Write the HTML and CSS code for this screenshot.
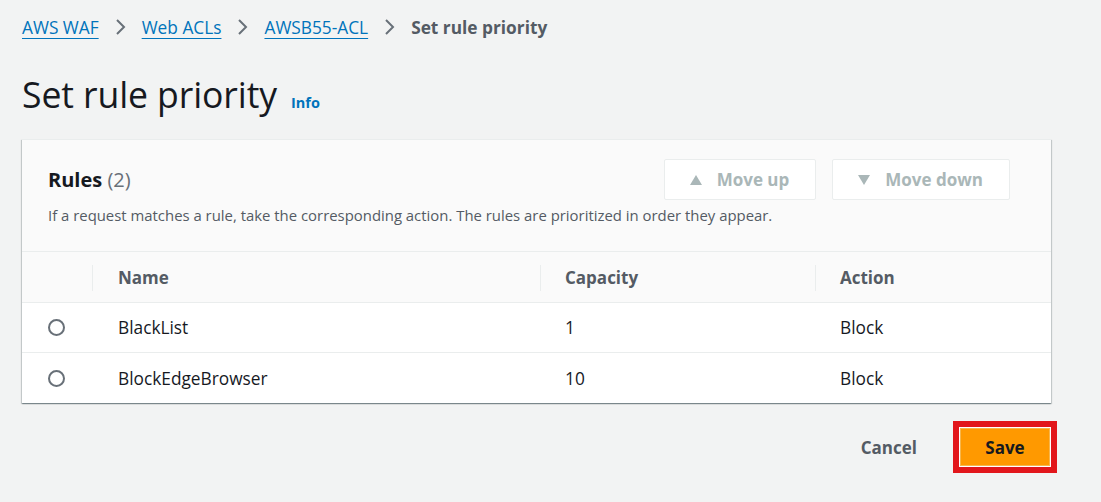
FILE: index.html
```html
<!DOCTYPE html>
<html>
<head>
<meta charset="utf-8">
<link rel="stylesheet" href="styles.css">
</head>
<body>
<div class="page">
  <nav class="crumbs">
    <a class="crumb-link">AWS WAF</a>
    <svg class="chev" viewBox="0 0 12 18" width="12" height="18"><path d="M3 2 L10 9 L3 16" fill="none" stroke="#687078" stroke-width="2"/></svg>
    <a class="crumb-link">Web ACLs</a>
    <svg class="chev" viewBox="0 0 12 18" width="12" height="18"><path d="M3 2 L10 9 L3 16" fill="none" stroke="#687078" stroke-width="2"/></svg>
    <a class="crumb-link">AWSB55-ACL</a>
    <svg class="chev" viewBox="0 0 12 18" width="12" height="18"><path d="M3 2 L10 9 L3 16" fill="none" stroke="#687078" stroke-width="2"/></svg>
    <span class="crumb-current">Set rule priority</span>
  </nav>

  <div class="title-row">
    <h1 class="title">Set rule priority</h1>
    <span class="info">Info</span>
  </div>

  <section class="card">
    <div class="card-head">
      <div class="head-top">
        <h2 class="card-title">Rules <span class="count">(2)</span></h2>
        <div class="actions">
          <button class="btn-disabled"><svg viewBox="0 0 14 12" width="14" height="12"><path d="M7 1 L13 11 L1 11 Z" fill="#aab7b8"/></svg>Move up</button>
          <button class="btn-disabled"><svg viewBox="0 0 14 12" width="14" height="12"><path d="M1 1 L13 1 L7 11 Z" fill="#aab7b8"/></svg>Move down</button>
        </div>
      </div>
      <p class="desc">If a request matches a rule, take the corresponding action. The rules are prioritized in order they appear.</p>
    </div>
    <div class="table">
      <div class="row head">
        <div class="cell sel"></div>
        <div class="cell c-name"><span class="hdr">Name</span></div>
        <div class="cell c-cap"><span class="hdr">Capacity</span></div>
        <div class="cell c-act"><span class="hdr">Action</span></div>
      </div>
      <div class="row body">
        <div class="cell sel"><span class="radio"></span></div>
        <div class="cell c-name">BlackList</div>
        <div class="cell c-cap">1</div>
        <div class="cell c-act">Block</div>
      </div>
      <div class="row body">
        <div class="cell sel"><span class="radio"></span></div>
        <div class="cell c-name">BlockEdgeBrowser</div>
        <div class="cell c-cap">10</div>
        <div class="cell c-act">Block</div>
      </div>
    </div>
  </section>

  <div class="footer">
    <button class="cancel">Cancel</button>
    <div class="highlight"><button class="save">Save</button></div>
  </div>
</div>
</body>
</html>
```

FILE: styles.css
```css
* { box-sizing: border-box; }
html, body { margin: 0; padding: 0; }
body {
  background: #f2f3f3;
  font-family: "Open Sans", "Noto Sans", sans-serif;
  color: #16191f;
  width: 1101px;
  height: 502px;
  overflow: hidden;
}
.page { padding: 13px 50px 0 22px; }

.crumbs {
  display: flex;
  align-items: center;
  height: 28px;
  font-size: 17.3px;
}
.crumb-link {
  color: #0073bb;
  text-decoration: underline;
  text-underline-offset: 4px;
  text-decoration-thickness: 1px;
}
.chev { margin: 0 16px 0 15px; }
.crumb-current { color: #545b64; font-weight: 700; }

.title-row {
  display: flex;
  align-items: baseline;
  gap: 14px;
  margin-top: 33px;
  height: 40px;
}
.title {
  margin: 0;
  font-size: 35.6px;
  font-weight: 400;
  line-height: 40px;
  letter-spacing: -0.1px;
}
.info { color: #0073bb; font-weight: 700; font-size: 14.5px; }

.card {
  margin-top: 25px;
  width: 1029px;
  background: #fafafa;
  border-top: 1px solid #eaeded;
  box-shadow: 0 1px 1px 0 rgba(0,28,36,0.3), 1px 1px 1px 0 rgba(0,28,36,0.15), -1px 1px 1px 0 rgba(0,28,36,0.15);
}
.card-head {
  padding: 19px 41px 0 26px;
  height: 112px;
  border-bottom: 1px solid #eaeded;
}
.head-top {
  display: flex;
  justify-content: space-between;
  align-items: flex-start;
}
.card-title {
  margin: 6px 0 0;
  font-size: 20px;
  font-weight: 700;
  line-height: 30px;
}
.count { font-weight: 400; color: #687078; }
.actions { display: flex; gap: 16px; }
.btn-disabled {
  display: flex;
  align-items: center;
  gap: 14px;
  height: 41px;
  padding: 0 26px 0 24px;
  background: #fff;
  border: 1px solid #eaeded;
  border-radius: 2px;
  font-family: inherit;
  font-size: 17px;
  font-weight: 700;
  color: #aab7b8;
}
.desc {
  margin: 5px 0 0;
  font-size: 14.9px;
  color: #545b64;
}

.table { width: 100%; }
.row { display: flex; }
.row.head { height: 51px; background: #fafafa; border-bottom: 1px solid #eaeded; }
.row.body { height: 50px; background: #fff; border-bottom: 1px solid #eaeded; font-size: 17.3px; }
.row.body:last-child { border-bottom: none; }
.cell { display: flex; align-items: center; }
.sel { width: 70px; justify-content: center; }
.c-name { width: 448px; padding-left: 26px; }
.c-cap { width: 275px; padding-left: 25px; }
.c-act { flex: 1; padding-left: 25px; }
.row.head .c-name, .row.head .c-cap, .row.head .c-act { position: relative; }
.row.head .c-name::before, .row.head .c-cap::before, .row.head .c-act::before {
  content: "";
  position: absolute;
  left: 0;
  top: 13px;
  height: 26px;
  border-left: 1px solid #eaeded;
}
.hdr { font-size: 17px; font-weight: 700; color: #545b64; }
.radio {
  width: 17px;
  height: 17px;
  border: 2px solid #687078;
  border-radius: 50%;
  background: #fff;
  margin-right: 2px;
}

.footer {
  display: flex;
  justify-content: flex-end;
  align-items: center;
  gap: 22px;
  margin-top: 18px;
  width: 1035px;
}
.cancel {
  background: none;
  border: none;
  font-family: inherit;
  font-size: 17px;
  font-weight: 700;
  color: #545b64;
  padding: 0 14px;
}
.highlight {
  border: 6px solid #e2161b;
  padding: 1px;
  background: #fff;
}
.save {
  display: block;
  width: 90px;
  height: 38px;
  background: #ff9900;
  border: 1px solid #f7b64b;
  font-family: inherit;
  font-size: 17px;
  font-weight: 700;
  color: #16191f;
}
```
